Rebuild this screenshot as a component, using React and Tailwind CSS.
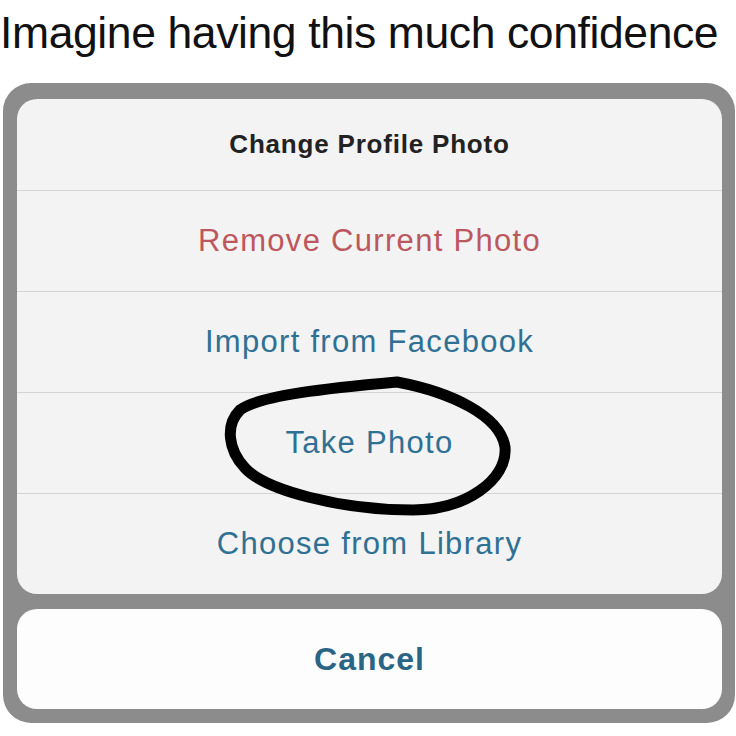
export default function App() {
  const rows = [
    { label: 'Remove Current Photo', color: 'text-[#bd575e]' },
    { label: 'Import from Facebook', color: 'text-[#2f7093]' },
    { label: 'Take Photo', color: 'text-[#2f7093]' },
    { label: 'Choose from Library', color: 'text-[#2f7093]' }
  ]

  return (
    <div className="relative w-[736px] h-[736px] bg-white overflow-hidden font-['Liberation_Sans',Arial,sans-serif]">
      {/* meme caption */}
      <h1 className="h-[83px] pt-[7px] text-[44.5px] leading-[52px] text-[#111] tracking-[-0.4px] whitespace-nowrap">
        Imagine having this much confidence
      </h1>

      {/* action sheet */}
      <div className="ml-[3px] w-[732px] h-[640px] bg-[#8c8c8c] rounded-[28px] pt-[16px] pl-[14px] pr-[13px] pb-[14px] flex flex-col gap-[15px]">
        <div className="bg-[#f3f3f3] rounded-[20px] flex flex-col">
          <div className="h-[91px] flex items-center justify-center text-[26px] tracking-[0.8px] font-bold text-[#222]">
            Change Profile Photo
          </div>
          {rows.map((row) => (
            <div
              key={row.label}
              className={`h-[101px] border-t border-[#d4d4d4] flex items-center justify-center text-[31px] tracking-[1.3px] ${row.color}`}
            >
              {row.label}
            </div>
          ))}
        </div>

        <div className="flex-1 bg-[#fdfdfd] rounded-[20px] flex items-center justify-center text-[32px] tracking-[1px] font-bold text-[#2a6586]">
          Cancel
        </div>
      </div>

      {/* hand-drawn circle */}
      <svg className="absolute inset-0 pointer-events-none" width="736" height="736" viewBox="0 0 736 736">
        <path
          d="M 397 382 C 450 392, 500 415, 505 447 C 508 480, 465 510, 413 510 C 340 510, 265 490, 245 468 C 228 450, 225 425, 240 410 C 260 395, 330 388, 397 382 Z"
          fill="none"
          stroke="#000"
          strokeWidth="11"
          strokeLinecap="round"
          strokeLinejoin="round"
        />
      </svg>
    </div>
  )
}
